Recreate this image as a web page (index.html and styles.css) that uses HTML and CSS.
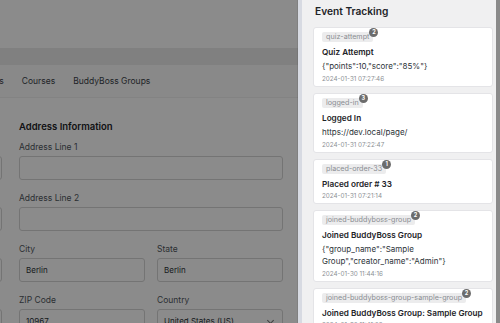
FILE: index.html
```html
<!DOCTYPE html>
<html lang="en">
<head>
  <meta charset="UTF-8" />
  <meta name="viewport" content="width=device-width, initial-scale=1.0" />
  <title>Account - Event Tracking</title>
  <link rel="stylesheet" href="styles.css">
</head>
<body>
  <div class="screen">

    <!-- ACCOUNT PAGE (dimmed behind the drawer) -->
    <div class="page">
      <div class="page-top"></div>
      <div class="page-band"></div>

      <nav class="tabs">
        <a href="#">Downloads</a>
        <a href="#">Courses</a>
        <a href="#">BuddyBoss Groups</a>
      </nav>

      <div class="form-grid">
        <div class="form-col">
          <div class="col-head"></div>
          <div class="field"><span class="label"></span><div class="input"></div></div>
          <div class="field"><span class="label"></span><div class="input"></div></div>
          <div class="field"><span class="label"></span><div class="input"></div></div>
          <div class="field"><span class="label"></span><div class="input"></div></div>
        </div>

        <div class="form-col">
          <h3 class="col-head">Address Information</h3>
          <div class="field"><label class="label">Address Line 1</label><div class="input"></div></div>
          <div class="field"><label class="label">Address Line 2</label><div class="input"></div></div>
          <div class="field-row">
            <div class="field"><label class="label">City</label><div class="input">Berlin</div></div>
            <div class="field"><label class="label">State</label><div class="input">Berlin</div></div>
          </div>
          <div class="field-row">
            <div class="field"><label class="label">ZIP Code</label><div class="input">10967</div></div>
            <div class="field"><label class="label">Country</label><div class="input select">United States (US)<span class="chev"></span></div></div>
          </div>
        </div>
      </div>

      <div class="dim"></div>
    </div>

    <!-- EVENT TRACKING DRAWER -->
    <aside class="drawer">
      <h2>Event Tracking</h2>

      <div class="event">
        <span class="tag">quiz-attempt<i class="count">2</i></span>
        <h4>Quiz Attempt</h4>
        <p class="data">{"points":10,"score":"85%"}</p>
        <div class="time">2024-01-31 07:27:46</div>
      </div>

      <div class="event">
        <span class="tag">logged-in<i class="count">3</i></span>
        <h4>Logged In</h4>
        <p class="data">https://dev.local/page/</p>
        <div class="time">2024-01-31 07:22:47</div>
      </div>

      <div class="event">
        <span class="tag">placed-order-33<i class="count">1</i></span>
        <h4>Placed order # 33</h4>
        <div class="time">2024-01-31 07:21:14</div>
      </div>

      <div class="event">
        <span class="tag">joined-buddyboss-group<i class="count">2</i></span>
        <h4>Joined BuddyBoss Group</h4>
        <p class="data">{"group_name":"Sample Group","creator_name":"Admin"}</p>
        <div class="time">2024-01-30 11:44:16</div>
      </div>

      <div class="event">
        <span class="tag">joined-buddyboss-group-sample-group<i class="count">2</i></span>
        <h4>Joined BuddyBoss Group: Sample Group</h4>
        <div class="time">2024-01-30 11:41:02</div>
      </div>
    </aside>

  </div>
</body>
</html>
```

FILE: styles.css
```css
* {margin: 0; padding: 0; box-sizing: border-box;}
body {
  font-family: Inter, "Noto Sans", sans-serif;
  color: #1d2327;
  background: #8a8a8a;
  overflow: hidden;
}

.screen {display: flex; height: 323px; overflow: hidden;}

/* Account page behind the overlay */
.page {flex: 1; position: relative; overflow: hidden; background: #fff;}
.page-top {height: 48px; background: #fff;}
.page-band {height: 17px; background: #ebebeb;}

.tabs {
  height: 33px; display: flex; align-items: center; gap: 18px;
  margin-left: -41px; border-bottom: 1px solid #f0f0f0;
  background: #fbfbfb;
}
.tabs a {font-size: 8.5px; color: #3c434a; text-decoration: none; white-space: nowrap;}

.form-grid {
  display: grid; grid-template-columns: 264px 264px; column-gap: 17px;
  margin-left: -262px; padding-top: 22px;
}
.col-head {height: 14px; font-size: 9.5px; font-weight: 600; line-height: 14px; margin-bottom: 7px;}
.field {display: flex; flex-direction: column; gap: 3px; margin-bottom: 12px; min-width: 0;}
.label {display: block; height: 12px; font-size: 8.5px; line-height: 12px; color: #50575e;}
.field-row {display: grid; grid-template-columns: 1fr 1fr; gap: 12px;}
.input {
  height: 24px; border: 1px solid #d5d5d5; border-radius: 3px; background: #fff;
  font-size: 8px; color: #2c3338; padding: 0 6px; display: flex; align-items: center;
  white-space: nowrap; position: relative;
}
.select .chev {
  position: absolute; right: 9px; top: 8px; width: 5px; height: 5px;
  border-right: 1px solid #777; border-bottom: 1px solid #777; transform: rotate(45deg);
}

.dim {position: absolute; inset: 0; background: rgba(0,0,0,0.455); border-right: 1px solid rgba(0,0,0,0.08);}

/* Event Tracking drawer */
.drawer {
  width: 198px; margin-right: 4px; background: #f0f0f1;
  border-left: 4px solid #d7dae2; padding: 4px 3px 0 11px; overflow: hidden;
}
.drawer h2 {font-size: 10.2px; font-weight: 600; line-height: 14px; margin: 0 0 9px 2px;}

.event {
  display: flex; flex-direction: column; align-items: flex-start;
  background: #fff; border: 1px solid #e4e4e7; border-radius: 3px;
  padding: 4px 8px 3px; margin-bottom: 6px;
}
.tag {
  position: relative; display: block; font-size: 7.2px; line-height: 10px;
  padding: 0 4px; background: #ececed; color: #8a8d92; border-radius: 2px;
}
.count {
  position: absolute; top: -4px; right: -5px; width: 9px; height: 9px; border-radius: 50%;
  background: #6c6c6c; color: #fff; font-style: normal; font-size: 5.5px; font-weight: 700;
  line-height: 9px; text-align: center;
}
.event h4 {font-size: 8.2px; font-weight: 600; line-height: 10px; margin-top: 5px;}
.event .data {font-size: 8px; line-height: 12px; margin-top: 3px; color: #2c3338; word-break: break-word;}
.event .time {font-size: 6.3px; line-height: 8px; margin-top: 3px; color: #8c8f94;}
```
